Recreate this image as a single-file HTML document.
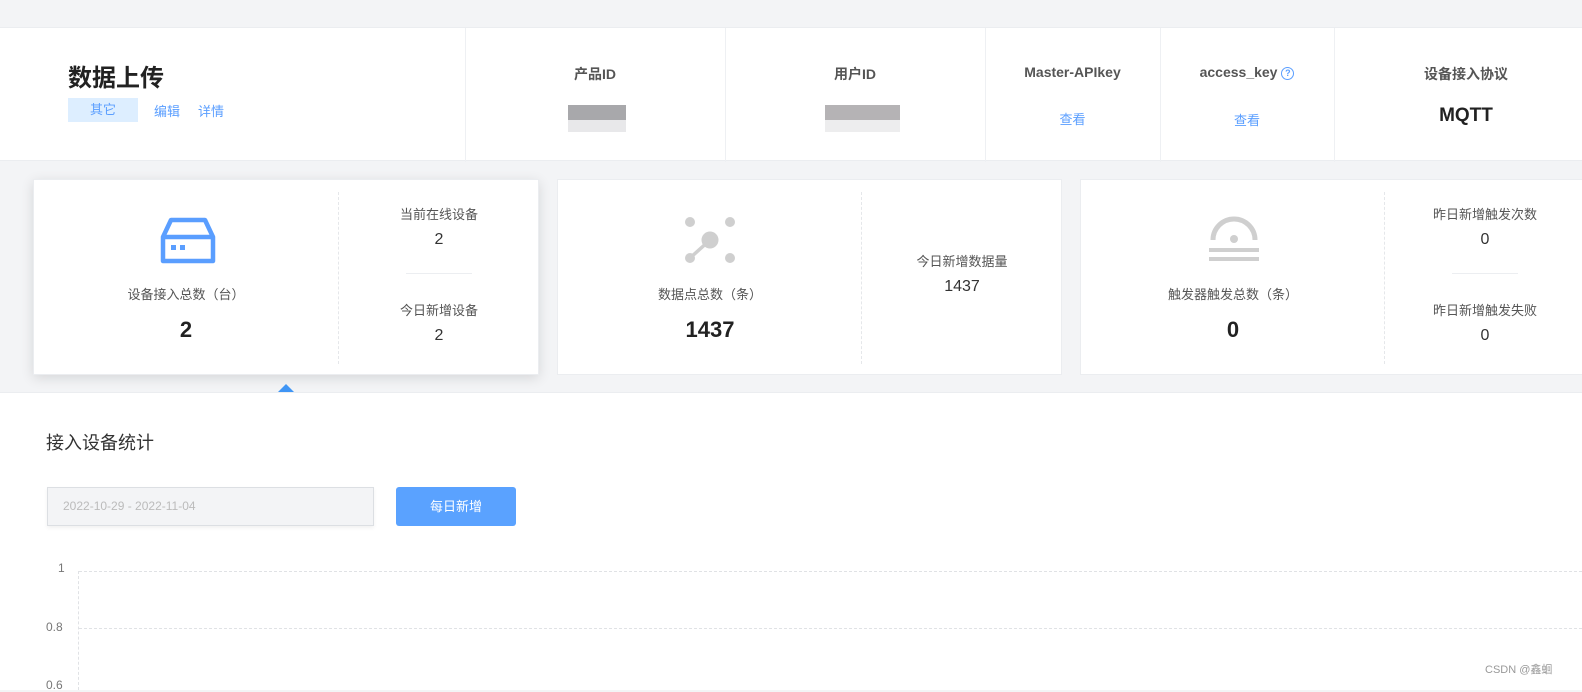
<!DOCTYPE html>
<html><head><meta charset="utf-8"><style>
*{margin:0;padding:0;box-sizing:border-box}
body{width:1582px;height:690px;overflow:hidden;background:#f3f4f6;font-family:"Liberation Sans","Noto Sans CJK SC",sans-serif;position:relative;color:#333}
.abs{position:absolute}
.hdr{left:0;top:27px;width:1582px;height:134px;background:#fff;border-top:1px solid #ebedf0;border-bottom:1px solid #ebedf0}
.vd{position:absolute;top:0;width:1px;height:134px;background:#eef0f3}
.ht{position:absolute;font-size:14px;font-weight:bold;color:#555;text-align:center;top:36px}
.card{position:absolute;top:179px;height:196px;background:#fff;border:1px solid #ebedf0}
.dd{position:absolute;top:12px;height:172px;border-left:1px dashed #e5e7ea}
.c{position:absolute;text-align:center;font-size:13px;color:#555}
.n{position:absolute;text-align:center;font-size:16px;color:#333}
.big{position:absolute;text-align:center;font-size:22px;font-weight:bold;color:#222}
.gl{position:absolute;border-top:1px dashed #e0e2e5;left:79px;width:1503px}
</style></head><body>
<div class="abs" style="left:0;top:392px;width:1582px;height:298px;background:#fff;border-top:1px solid #ebedf0"></div>
<div class="abs hdr">
 <div class="abs" style="left:68px;top:30px;font-size:24px;font-weight:bold;color:#222">数据上传</div>
 <div class="abs" style="left:68px;top:70px;width:70px;height:24px;background:#ddeeff;color:#5a9eff;font-size:13px;text-align:center;line-height:24px">其它</div>
 <div class="abs" style="left:154px;top:73px;font-size:13px;color:#5a9eff">编辑</div>
 <div class="abs" style="left:198px;top:73px;font-size:13px;color:#5a9eff">详情</div>
 <div class="vd" style="left:465px"></div><div class="vd" style="left:725px"></div><div class="vd" style="left:985px"></div><div class="vd" style="left:1160px"></div><div class="vd" style="left:1334px"></div>
 <div class="ht" style="left:465px;width:260px">产品ID</div>
 <div class="ht" style="left:725px;width:260px">用户ID</div>
 <div class="ht" style="left:985px;width:175px">Master-APIkey</div>
 <div class="ht" style="left:1160px;width:174px">access_key <span style="display:inline-block;width:13px;height:13px;border:1px solid #5a9eff;border-radius:50%;color:#5a9eff;font-size:9px;line-height:11px;vertical-align:1px">?</span></div>
 <div class="ht" style="left:1334px;width:264px">设备接入协议</div>
 <div class="abs" style="left:985px;width:175px;top:81px;text-align:center;font-size:13px;color:#5a9eff">查看</div>
 <div class="abs" style="left:1160px;width:174px;top:82px;text-align:center;font-size:13px;color:#5a9eff">查看</div>
 <div class="abs" style="left:1334px;width:264px;top:77px;text-align:center;font-size:19px;font-weight:bold;color:#222">MQTT</div>
 <div class="abs" style="left:568px;top:77px;width:58px;height:15px;background:#a8a8ab"></div>
 <div class="abs" style="left:568px;top:92px;width:58px;height:12px;background:#e8e8ea"></div>
 <div class="abs" style="left:825px;top:77px;width:75px;height:15px;background:#b5b3b5"></div>
 <div class="abs" style="left:825px;top:92px;width:75px;height:12px;background:#ededee"></div>
</div>

<div class="card" style="left:33px;width:506px;box-shadow:0 3px 12px rgba(0,0,0,.12)">
 <svg class="abs" style="left:126px;top:37px" width="56" height="48" viewBox="0 0 56 48"><path d="M11 3H45L53 20V44H3V20Z M3 20H53" fill="none" stroke="#5a9eff" stroke-width="4.5" stroke-linejoin="round"/><rect x="11" y="28" width="5" height="5" fill="#5a9eff"/><rect x="20" y="28" width="5" height="5" fill="#5a9eff"/></svg>
 <div class="c" style="left:0;width:304px;top:104px">设备接入总数（台）</div>
 <div class="big" style="left:0;width:304px;top:137px">2</div>
 <div class="dd" style="left:304px"></div>
 <div class="c" style="left:304px;width:202px;top:24px">当前在线设备</div>
 <div class="n" style="left:304px;width:202px;top:51px">2</div>
 <div class="abs" style="left:372px;top:93px;width:66px;height:1px;background:#eceef1"></div>
 <div class="c" style="left:304px;width:202px;top:120px">今日新增设备</div>
 <div class="n" style="left:304px;width:202px;top:147px">2</div>
</div>
<div class="abs" style="left:278px;top:384px;width:0;height:0;border-left:8px solid transparent;border-right:8px solid transparent;border-bottom:8px solid #3f95f5"></div>

<div class="card" style="left:557px;width:505px">
 <svg class="abs" style="left:124px;top:36px" width="56" height="50" viewBox="0 0 56 50"><circle cx="8" cy="6" r="5" fill="#cfcfcf"/><circle cx="48" cy="6" r="5" fill="#cfcfcf"/><circle cx="48" cy="42" r="5" fill="#cfcfcf"/><circle cx="8" cy="42" r="5" fill="#cfcfcf"/><circle cx="28" cy="24" r="8.5" fill="#cfcfcf"/><line x1="8" y1="42" x2="28" y2="24" stroke="#cfcfcf" stroke-width="3.5"/></svg>
 <div class="c" style="left:0;width:304px;top:104px">数据点总数（条）</div>
 <div class="big" style="left:0;width:304px;top:137px">1437</div>
 <div class="dd" style="left:303px"></div>
 <div class="c" style="left:303px;width:202px;top:71px">今日新增数据量</div>
 <div class="n" style="left:303px;width:202px;top:98px">1437</div>
</div>

<div class="card" style="left:1080px;width:510px">
 <svg class="abs" style="left:125px;top:36px" width="56" height="50" viewBox="0 0 56 50"><path d="M7 24A21 21 0 0 1 49 24" fill="none" stroke="#cfcfcf" stroke-width="5"/><circle cx="28" cy="23" r="4" fill="#cfcfcf"/><rect x="3" y="32" width="50" height="4" fill="#cfcfcf"/><rect x="3" y="41" width="50" height="4" fill="#cfcfcf"/></svg>
 <div class="c" style="left:0;width:304px;top:104px">触发器触发总数（条）</div>
 <div class="big" style="left:0;width:304px;top:137px">0</div>
 <div class="dd" style="left:303px"></div>
 <div class="c" style="left:303px;width:202px;top:24px">昨日新增触发次数</div>
 <div class="n" style="left:303px;width:202px;top:51px">0</div>
 <div class="abs" style="left:371px;top:93px;width:66px;height:1px;background:#eceef1"></div>
 <div class="c" style="left:303px;width:202px;top:120px">昨日新增触发失败</div>
 <div class="n" style="left:303px;width:202px;top:147px">0</div>
</div>

<div class="abs" style="left:46px;top:429px;font-size:18px;color:#333">接入设备统计</div>
<div class="abs" style="left:47px;top:487px;width:327px;height:39px;background:#f3f4f6;border:1px solid #dcdfe3;box-shadow:0 2px 4px rgba(0,0,0,.06);font-size:12px;color:#bbb;line-height:37px;padding-left:15px">2022-10-29 - 2022-11-04</div>
<div class="abs" style="left:396px;top:487px;width:120px;height:39px;background:#5aa2ff;border-radius:3px;color:#fff;font-size:13px;text-align:center;line-height:39px">每日新增</div>

<div class="abs" style="left:58px;top:561px;font-size:12px;color:#777">1</div>
<div class="abs" style="left:46px;top:620px;font-size:12px;color:#777">0.8</div>
<div class="abs" style="left:46px;top:678px;font-size:12px;color:#777">0.6</div>
<div class="gl" style="top:571px"></div>
<div class="gl" style="top:628px"></div>
<div class="abs" style="left:78px;top:571px;height:119px;border-left:1px dashed #e0e2e5"></div>
<div class="abs" style="left:1485px;top:661px;font-size:11px;color:#999">CSDN @鑫蛔</div>
</body></html>
